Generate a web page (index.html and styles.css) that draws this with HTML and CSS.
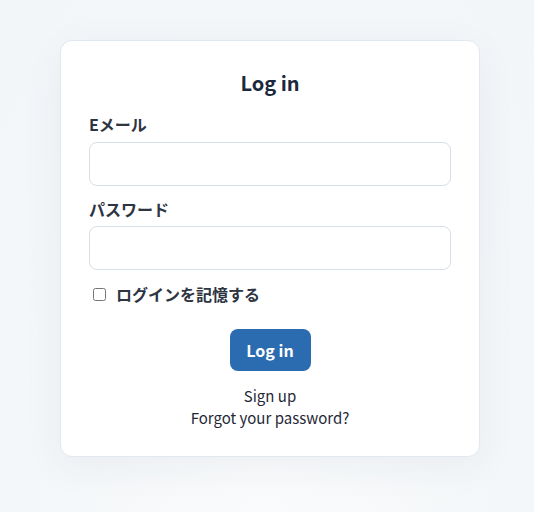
FILE: index.html
```html
<!DOCTYPE html>
<html lang="ja">
<head>
<meta charset="utf-8">
<title>Log in</title>
<link rel="stylesheet" href="styles.css">
</head>
<body>
<main class="page">
  <form class="card">
    <h1 class="title">Log in</h1>
    <label class="label" for="email">Eメール</label>
    <input class="input" id="email" type="email">
    <label class="label label-pw" for="password">パスワード</label>
    <input class="input" id="password" type="password">
    <label class="remember"><input class="check" type="checkbox"><span>ログインを記憶する</span></label>
    <div class="actions"><button class="btn" type="button">Log in</button></div>
    <div class="links">
      <a class="link" href="#">Sign up</a>
      <a class="link" href="#">Forgot your password?</a>
    </div>
  </form>
</main>
</body>
</html>
```

FILE: styles.css
```css
* { box-sizing: border-box; }
html, body { margin: 0; height: 100%; }
body {
  font-family: "Noto Sans CJK JP", "Noto Sans", sans-serif;
  background: radial-gradient(ellipse at 50% 100%, #fafbfc 0%, #f4f7f9 60%, #f3f6f9 100%);
  color: #2d3748;
}
.page {
  display: flex;
  justify-content: center;
  padding: 40px 0 0 6px;
}
.card {
  width: 420px;
  background: #fff;
  border: 1px solid #e2e8f0;
  border-radius: 12px;
  box-shadow: 0 10px 40px rgba(30, 50, 80, 0.06);
  padding: 28px 28px 27px;
  display: flex;
  flex-direction: column;
}
.title {
  margin: 0 0 15px;
  font-size: 20px;
  line-height: 28px;
  font-weight: 700;
  text-align: center;
  color: #1a2a3c;
}
.label {
  font-size: 16px;
  line-height: 24px;
  font-weight: 700;
  color: #2d3442;
  margin-bottom: 6px;
}
.label-pw { margin-top: 11px; margin-bottom: 5px; }
.input {
  height: 44px;
  width: 100%;
  border: 1px solid #d6dee8;
  border-radius: 8px;
  background: #fff;
  font: inherit;
  padding: 0 12px;
}
.remember {
  margin-top: 12px;
  display: flex;
  align-items: center;
  gap: 10px;
  font-size: 16px;
  line-height: 24px;
  font-weight: 700;
  color: #2d3442;
  padding-left: 4px;
}
.check {
  margin: 0;
  width: 13px;
  height: 13px;
}
.actions {
  margin-top: 23px;
  display: flex;
  justify-content: center;
}
.btn {
  width: 81px;
  height: 42px;
  border: 0;
  border-radius: 8px;
  background: #2b6cb0;
  color: #fff;
  font-family: inherit;
  font-size: 16px;
  font-weight: 700;
}
.links {
  margin-top: 14px;
  display: flex;
  flex-direction: column;
  align-items: center;
}
.link {
  font-size: 15px;
  line-height: 22px;
  color: #1f2937;
  text-decoration: none;
}
```
